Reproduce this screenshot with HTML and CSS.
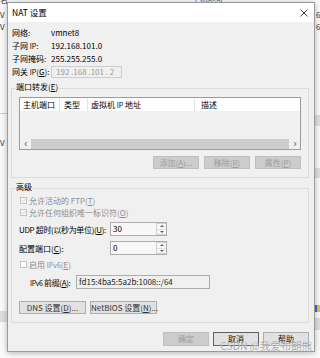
FILE: index.html
```html
<!DOCTYPE html>
<html lang="zh-CN">
<head>
	<meta charset="utf-8">
	<title>NAT 设置</title>
	<link rel="stylesheet" href="styles.css">
</head>
<body>
	<div class="desk">
		<!-- the window behind the dialog -->
		<span class="bg-text bg-t1">名</span>
		<span class="bg-text bg-t2">主机地址</span>
		<span class="bg-text bg-v1">V</span>
		<span class="bg-text bg-v2">V</span>
		<span class="bg-text bg-v3">V</span>
		<span class="bg-line bg-l1"></span>
		<span class="bg-band bg-b1"></span>
		<span class="bg-text bg-r1">6</span>
		<span class="bg-text bg-r2">6</span>
		<span class="bg-band bg-b2"></span>
		<span class="bg-band bg-b3"></span>
		<span class="bg-band bg-b4"></span>
		<span class="bg-shield"></span>

		<div class="dialog">
			<div class="titlebar">
				<span class="title">NAT 设置</span>
				<svg class="close" viewBox="0 0 8 8" width="8" height="8">
					<path d="M0.5 0.5L7.5 7.5M7.5 0.5L0.5 7.5" stroke="#111" stroke-width="0.8" fill="none"></path>
				</svg>
			</div>
			<div class="body">
				<div class="info">
					<div class="row"><span class="lbl">网络:</span><span>vmnet8</span></div>
					<div class="row"><span class="lbl">子网 <small>IP</small>:</span><span>192.168.101.0</span></div>
					<div class="row"><span class="lbl">子网掩码:</span><span>255.255.255.0</span></div>
					<div class="row gw"><span class="lbl">网关 <small>IP</small>(<u>G</u>):</span><div class="field ip">192 .168 .101 . 2</div></div>
				</div>

				<fieldset class="group">
					<legend>端口转发(<u>E</u>)</legend>
					<div class="list">
						<div class="list-head">
							<span class="col c1">主机端口</span>
							<span class="col c2">类型</span>
							<span class="col c3">虚拟机 <small>IP</small> 地址</span>
							<span class="col c4">描述</span>
						</div>
						<div class="list-body"></div>
						<div class="hscroll">
							<span class="arr">
								<svg viewBox="0 0 6 6" width="6" height="6"><path d="M3.8 1L1.8 3L3.8 5" stroke="#555" stroke-width="0.9" fill="none"></path></svg>
							</span>
							<span class="thumb"></span>
							<span class="arr">
								<svg viewBox="0 0 6 6" width="6" height="6"><path d="M2.2 1L4.2 3L2.2 5" stroke="#555" stroke-width="0.9" fill="none"></path></svg>
							</span>
						</div>
					</div>
					<div class="btns">
						<button class="btn" disabled>添加(<u>A</u>)...</button>
						<button class="btn" disabled>移除(<u>R</u>)</button>
						<button class="btn" disabled>属性(<u>P</u>)</button>
					</div>
				</fieldset>

				<fieldset class="group adv">
					<legend>高级</legend>
					<div class="check">
						<span class="box"><svg viewBox="0 0 7 7" width="5" height="5"><path d="M0.8 3.6L2.7 5.4L6.2 1.4" stroke="#bdbdbd" stroke-width="0.9" fill="none"></path></svg></span>
						<span>允许活动的 FTP(<u>T</u>)</span>
					</div>
					<div class="check">
						<span class="box"><svg viewBox="0 0 7 7" width="5" height="5"><path d="M0.8 3.6L2.7 5.4L6.2 1.4" stroke="#bdbdbd" stroke-width="0.9" fill="none"></path></svg></span>
						<span>允许任何组织唯一标识符(<u>O</u>)</span>
					</div>
					<div class="frow udp">
						<span class="flbl tight">UDP 超时(以秒为单位)(<u>U</u>):</span>
						<div class="spin">
							<span class="val">30</span>
							<span class="arrows">
								<span class="up"></span>
								<span class="down"></span>
							</span>
						</div>
					</div>
					<div class="frow port">
						<span class="flbl">配置端口(<u>C</u>):</span>
						<div class="spin">
							<span class="val">0</span>
							<span class="arrows">
								<span class="up"></span>
								<span class="down"></span>
							</span>
						</div>
					</div>
					<div class="check off">
						<span class="box"></span>
						<span>启用 <small>IPv6</small>(<u>E</u>)</span>
					</div>
					<div class="frow v6">
						<span class="flbl tight"><small>IPv6</small> 前缀(<u>A</u>):</span>
						<div class="field prefix">fd15:4ba5:5a2b:1008::/64</div>
					</div>
					<div class="dns-row">
						<button class="btn">DNS 设置(<u>D</u>)...</button>
						<button class="btn">NetBIOS 设置(<u>N</u>)...</button>
					</div>
				</fieldset>

				<div class="footer">
					<button class="btn" disabled>确定</button>
					<button class="btn default">取消</button>
					<button class="btn">帮助</button>
				</div>
			</div>
		</div>

		<div class="watermark">CSDN @我爱布朗熊</div>
	</div>
</body>
</html>
```

FILE: styles.css
```css
* {
	box-sizing: border-box;
}
body {
	margin: 0;
	background: #fafafa;
	font-family: "Noto Sans CJK SC", "Noto Sans", sans-serif;
	font-size: 8px;
	color: #000;
}
.desk {
	position: relative;
	width: 320px;
	height: 358px;
	overflow: hidden;
}
small {
	font-size: 7px;
}

/* background window fragments */
.bg-text {
	position: absolute;
	font-size: 8px;
	line-height: 10px;
	color: #333;
}
.bg-t1 { left: 0; top: -5px; }
.bg-t2 { left: 192px; top: -6px; color: #555; }
.bg-v1 { left: 0; top: 10px; }
.bg-v2 { left: 0; top: 22px; }
.bg-v3 { left: 0; top: 138px; }
.bg-r1 { left: 316px; top: 10px; }
.bg-r2 { left: 316px; top: 22px; }
.bg-line {
	position: absolute;
	height: 1px;
	background: #cfcfcf;
}
.bg-l1 { left: 0; top: 113px; width: 8px; }
.bg-band {
	position: absolute;
	background: #dedede;
}
.bg-b1 { left: 0; top: 311px; width: 8px; height: 11px; }
.bg-b2 { left: 315px; top: 115px; width: 5px; height: 11px; }
.bg-b3 { left: 315px; top: 168px; width: 5px; height: 10px; }
.bg-b4 { left: 315px; top: 318px; width: 5px; height: 12px; }
.bg-shield {
	position: absolute;
	left: 315px;
	top: 305px;
	width: 5px;
	height: 7px;
	background: linear-gradient(90deg, #2a6fd6 50%, #f2c12e 50%);
}

/* dialog window */
.dialog {
	position: absolute;
	left: 7px;
	top: 2px;
	width: 308px;
	height: 350px;
	border: 1px solid #9a9a9a;
	background: #f0f0f0;
	box-shadow: 0 1px 6px rgba(0, 0, 0, 0.28);
	display: flex;
	flex-direction: column;
}
.titlebar {
	height: 19px;
	background: #fff;
	display: flex;
	align-items: center;
	justify-content: space-between;
	padding: 0 6px 0 4px;
}
.title {
	font-size: 8.5px;
	line-height: 19px;
}
.close {
	display: block;
}
.body {
	flex: 1;
	display: flex;
	flex-direction: column;
	padding: 4px 5px 0 3px;
}

/* network info */
.info {
	padding-left: 1px;
}
.row {
	display: flex;
	align-items: center;
	height: 13px;
	line-height: 13px;
}
.row .lbl {
	width: 39px;
	flex: none;
}
.row.gw {
	height: 14px;
}
.field {
	height: 12px;
	border: 1px solid #adadad;
	background: #f0f0f0;
	line-height: 10px;
	padding: 0 2px;
	white-space: pre;
	overflow: hidden;
}
.field.ip {
	width: 71px;
	border-color: #cccccc;
	color: #9a9a9a;
	padding-left: 4px;
}

/* group boxes */
.group {
	margin: 3px 0 0;
	padding: 3px 7px 8px;
	border: 1px solid #dcdcdc;
	min-width: 0;
}
.group legend {
	padding: 0 1px 2px;
	margin-left: -4px;
	line-height: 10px;
}
.group.adv {
	margin-top: 4px;
	padding-top: 0;
}

/* port forwarding list */
.list {
	height: 53px;
	border: 1px solid #9c9c9c;
	background: #f0f0f0;
	display: flex;
	flex-direction: column;
}
.list-head {
	height: 13px;
	background: #fff;
	display: flex;
	line-height: 13px;
}
.col {
	border-right: 1px solid #e5e5e5;
	white-space: nowrap;
}
.c1 { width: 40px; padding-left: 3px; }
.c2 { width: 28px; padding-left: 4px; }
.c3 { width: 107px; padding-left: 3px; }
.c4 { flex: 1; padding-left: 6px; border-right: 0; }
.list-body {
	flex: 1;
}
.hscroll {
	height: 10px;
	display: flex;
}
.hscroll .arr {
	width: 11px;
	display: flex;
	align-items: center;
	justify-content: center;
}
.hscroll .thumb {
	flex: 1;
	background: #cdcdcd;
}

/* buttons */
.btn {
	height: 13px;
	width: 46px;
	padding: 0;
	border: 1px solid #adadad;
	background: #e1e1e1;
	font: inherit;
	line-height: 11px;
	color: #111;
	white-space: nowrap;
}
.btn:disabled {
	background: #cccccc;
	border-color: #bfbfbf;
	color: #9d9d9d;
}
.btn.default {
	border-color: #5f5f5f;
}
.btns {
	display: flex;
	justify-content: flex-end;
	gap: 5px;
	margin-top: 6px;
}

/* advanced */
.check {
	display: flex;
	align-items: center;
	height: 12px;
	color: #8d8d8d;
}
.box {
	width: 7px;
	height: 7px;
	margin: 0 2px 0 1px;
	border: 1px solid #c4c4c4;
	background: #f6f6f6;
	display: flex;
	align-items: center;
	justify-content: center;
}
.check.off {
	margin-top: 3px;
}
.check.off .box {
	background: #fcfcfc;
}
.frow {
	display: flex;
	align-items: center;
	height: 14px;
}
.frow.udp {
	margin-top: 4px;
}
.frow.port {
	margin-top: 5px;
}
.frow.v6 {
	margin-top: 5px;
}
.flbl {
	width: 91px;
	flex: none;
	white-space: nowrap;
}
.flbl.tight {
	letter-spacing: -0.35px;
}
.v6 .flbl {
	width: 57px;
	padding-left: 11px;
}
.spin {
	width: 57px;
	height: 14px;
	border: 1px solid #adadad;
	background: #f7f7f7;
	display: flex;
}
.spin .val {
	flex: 1;
	padding-left: 2px;
	line-height: 11px;
}
.spin .arrows {
	width: 10px;
	border: 1px solid #d2d2d2;
	border-right: 0;
	display: flex;
	flex-direction: column;
}
.arrows span {
	flex: 1;
	display: flex;
	align-items: center;
	justify-content: center;
}
.arrows .up {
	border-bottom: 1px solid #e2e2e2;
}
.arrows .up::after {
	content: '';
	border-left: 2px solid transparent;
	border-right: 2px solid transparent;
	border-bottom: 2px solid #606060;
}
.arrows .down::after {
	content: '';
	border-left: 2px solid transparent;
	border-right: 2px solid transparent;
	border-top: 2px solid #606060;
}
.field.prefix {
	width: 134px;
	height: 14px;
	line-height: 11px;
	color: #222;
}
.dns-row {
	display: flex;
	gap: 4px;
	margin-top: 12px;
}
.dns-row .btn {
	width: 67px;
	color: #333;
}

/* dialog buttons */
.footer {
	display: flex;
	justify-content: flex-end;
	gap: 4px;
	margin-top: 9px;
}
.footer .btn {
	height: 14px;
	line-height: 12px;
}

.watermark {
	position: absolute;
	left: 220px;
	top: 339px;
	font-size: 10.5px;
	line-height: 14px;
	color: rgba(140, 140, 140, 0.75);
	text-shadow: 0 0 1px #fff;
	white-space: nowrap;
}
```
